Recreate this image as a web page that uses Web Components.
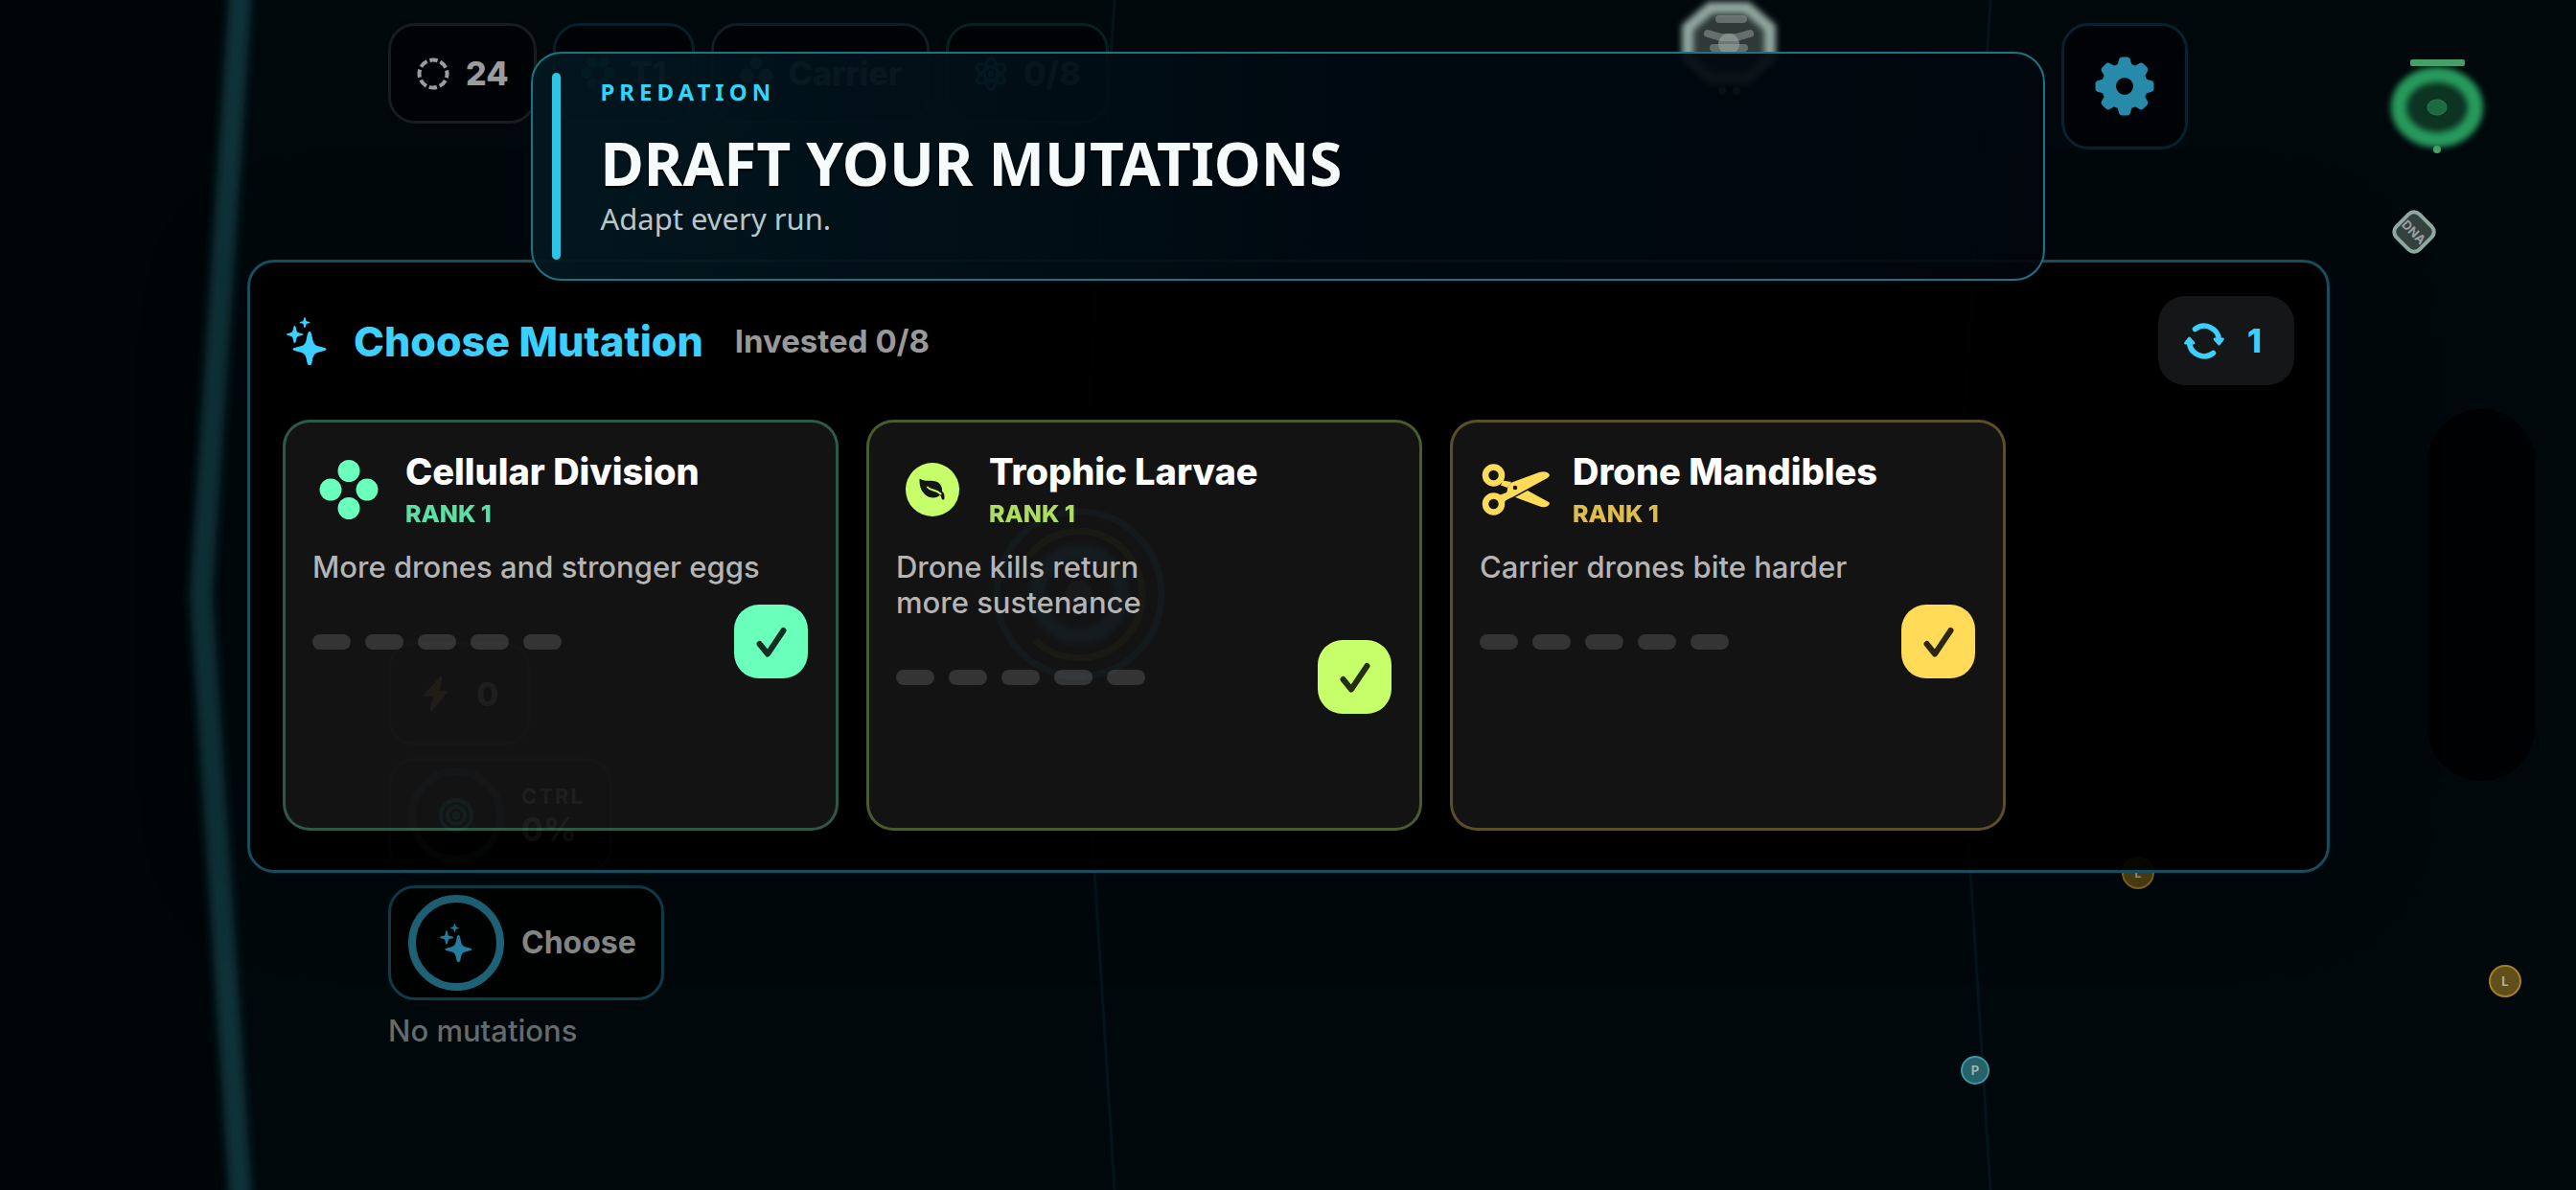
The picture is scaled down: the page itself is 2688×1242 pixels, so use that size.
<!DOCTYPE html>
<html lang="en">
<head>
<meta charset="utf-8">
<meta name="viewport" content="width=device-width, initial-scale=1">
<title>Predation</title>
<style>
  html, body {
    margin: 0;
    height: 100%;
    background: #00080b;
  }
  body {
    font-family: Inter, "Liberation Sans", sans-serif;
    color: #fff;
    overflow: hidden;
  }
</style>
</head>
<body>
<game-app></game-app>

<script>
const ICONS = {
  sparkles: ['0 0 42 50', `
    <path d="M24 15c1.500 0 2 2 3 7 1.300 6.500 2.500 7.500 8 8.800 4 1 6.500 1.400 6.500 2.700s-2.500 1.700-6.500 2.700c-5.500 1.300-6.700 2.300-8 8.800-1 5-1.500 5-3 5s-2 0-3-5c-1.300-6.500-2.500-7.500-8-8.800-4-1-6.500-1.400-6.500-2.700s2.500-1.700 6.500-2.700c5.500-1.300 6.700-2.300 8-8.800 1-5 1.500-7 3-7z"/>
    <path d="M8.500 9c1 0 1.200 1.500 1.700 4 .6 2.500 1.100 2.900 3.300 3.400 2.500.6 4 .8 4 1.600s-1.500 1-4 1.600c-2.200.5-2.700.9-3.300 3.400-.5 2.500-.7 4-1.700 4s-1.200-1.500-1.700-4c-.6-2.500-1.100-2.900-3.300-3.400-2.500-.6-3.500-.8-3.500-1.600s1-1 3.500-1.600c2.200-.5 2.700-.9 3.300-3.400.5-2.500.7-4 1.700-4z"/>
    <path d="M19 0c1 0 .9 3 1.700 4 .7.700 3.800.7 3.800 1.600s-3.100.9-3.800 1.600c-.8 1-.7 4-1.700 4s-.9-3-1.700-4c-.7-.7-3.800-.7-3.800-1.600s3.100-.9 3.800-1.600c.8-1 .7-4 1.700-4z"/>`],
  reroll: ['0 0 42 38', `
    <g fill="none" stroke="currentColor" stroke-width="5.500" stroke-linecap="round">
      <path d="M11.500 6.500A15.500 15.500 0 0 1 36.500 18"/><path d="M30.500 31.500A15.500 15.500 0 0 1 5.500 20"/></g>
    <path d="M32 15.500h9q1.500.5.500 2.500l-4 5q-1 1-2 0l-4.500-5q-1-2 1-2.500z"/>
    <path d="M10 22.500H1q-1.500-.5-.5-2.500l4-5q1-1 2 0l4.500 5q1 2-1 2.500z"/>`],
  cells: ['0 0 62 62', '<circle cx="31" cy="11.500" r="11.500"/><circle cx="12" cy="31" r="11.500"/><circle cx="50" cy="31" r="11.500"/><circle cx="31" cy="50.500" r="11.500"/>'],
  leaf: ['0 0 56 56', `
    <circle cx="28" cy="28" r="28"/>
    <path fill="#141515" d="M15.500 17c4 2.500 8 1.500 13 2 7 .6 10 5 9.500 11 2.500 1.500 2.500 3.500 2.500 7 0 2-2.500 2-3 0-.2-1.500-.6-2.800-2-3.200-3 4-11 3.500-15.500-.8-4.500-4.500-5.500-9.500-5.500-15.300 0-1 .3-1.200 1-.7z"/>
    <path fill="none" stroke="currentColor" stroke-width="2" stroke-linecap="round" d="M23 25.500c3 4 8.500 2 13.500 7"/>`],
  scissors: ['0 0 70 54', `
    <g fill="none" stroke="currentColor" stroke-width="6.500"><circle cx="11.500" cy="12" r="8.500"/><circle cx="11.500" cy="42" r="8.500"/></g>
    <path d="M21 17.500l9 1.500-4 6-7-2.500z"/>
    <path d="M17 33l7-2.500c2.500-1 1.500-4 2.500-6.500 1.200-3 3.500-4.300 6-5.200L59 9c5-1.500 10-.5 11 3-.8 2-1.800 2.500-3 3.200L31 35c-5 2.500-7.500 2.500-8 6z"/>
    <path d="M34 35l13-7 22 12c1.500 1 1 1.500.5 2.500-1.800 3.500-7 3-10.500 1.700z"/>
    <circle cx="34" cy="25" r="2.300" fill="#141515"/>`],
  check: ['0 0 32 32', '<path d="M3.500 18l8.500 10.500L28.500 4" fill="none" stroke="currentColor" stroke-width="6" stroke-linecap="round" stroke-linejoin="round"/>'],
  gear: ['0 0 62 62', `
    <circle cx="31" cy="31" r="16.500" fill="none" stroke="currentColor" stroke-width="15"/>
    ${[0, 45, 90, 135, 180, 225, 270, 315].map(a => `<path transform="rotate(${a} 31 31)" d="M22.500 12l3-10Q26.500.5 28.500.5h5q2 0 3 1.500l3 10z"/>`).join('')}`],
  ring: ['0 0 36 36', `<circle cx="18" cy="18" r="14.500" fill="none" stroke="currentColor" stroke-width="4" stroke-dasharray="8.400 3" stroke-dashoffset="4.200"/>`],
  cluster: ['0 0 36 36', '<circle cx="12" cy="6" r="5.500"/><circle cx="24" cy="6" r="5.500"/><circle cx="6" cy="17" r="5.500"/><circle cx="30" cy="17" r="5.500"/><circle cx="12" cy="28" r="5.500"/><circle cx="24" cy="28" r="5.500"/>'],
  trio: ['0 0 36 36', '<circle cx="18" cy="7" r="6.500"/><circle cx="8" cy="20" r="7.500"/><circle cx="28" cy="20" r="7.500"/><circle cx="18" cy="31" r="5"/>'],
  atom: ['0 0 36 36', `<circle cx="18" cy="18" r="3.500"/>
    <g fill="none" stroke="currentColor" stroke-width="3"><ellipse cx="18" cy="18" rx="6.500" ry="16.500"/>
    <ellipse cx="18" cy="18" rx="6.500" ry="16.500" transform="rotate(60 18 18)"/><ellipse cx="18" cy="18" rx="6.500" ry="16.500" transform="rotate(120 18 18)"/></g>`],
  bolt: ['0 0 28 40', '<path d="M18 1c2-2 3.500-.5 3 1.500L18 16h8c2 0 2 1.500 1 3L10.500 38.500c-2 2-4 1-3.500-1L11 23H2c-2 0-2.500-1.500-1-3z"/>'],
  target: ['0 0 36 36', '<circle cx="18" cy="18" r="4.500"/><g fill="none" stroke="currentColor" stroke-width="4"><circle cx="18" cy="18" r="9"/><circle cx="18" cy="18" r="16"/></g>']
};

function define(name, html, setup) {
  const template = document.createElement('template');
  template.innerHTML = html;
  customElements.define(name, class extends HTMLElement {
    connectedCallback() {
      if (this.shadowRoot) return;
      this.attachShadow({ mode: 'open' });
      this.shadowRoot.appendChild(template.content.cloneNode(true));
      if (setup) setup(this, this.shadowRoot);
    }
  });
}

define('ui-icon', `
  <style>
    :host { display: inline-flex; flex: none; width: 36px; height: 36px; }
    svg { width: 100%; height: 100%; fill: currentColor; overflow: visible; }
  </style>
  <svg aria-hidden="true"></svg>
`, (host, root) => {
  const [box, shapes] = ICONS[host.getAttribute('name')];
  const svg = root.querySelector('svg');
  svg.setAttribute('viewBox', box);
  svg.innerHTML = shapes;
});

// Playfield: membrane, creatures and pickups
define('game-world', `
  <style>
    :host { display: block; min-width: 0; min-height: 0; overflow: hidden; }
    svg { display: block; width: 100%; height: 100%; }
    text { font-family: Inter, sans-serif; font-weight: 700; text-anchor: middle; }
  </style>
  <svg viewBox="0 0 2688 1242" preserveAspectRatio="xMidYMid slice">
    <defs>
      <filter id="soft" x="-20%" y="-20%" width="140%" height="140%"><feGaussianBlur stdDeviation="3"/></filter>
      <filter id="wall" filterUnits="userSpaceOnUse" x="150" y="-40" width="160" height="1320"><feGaussianBlur stdDeviation="5"/></filter>
    </defs>
    <path d="M0 0H250L210 621 250 1242H0z" fill="#000508"/>
    <path d="M253-40L210 621 253 1282" fill="none" stroke="#103338" stroke-width="24" filter="url(#wall)"/>
    <g fill="none" stroke="#02151a" stroke-width="3">
      <path d="M1163 0L1124 621 1163 1242"/><path d="M2077 0L2038 621 2077 1242"/>
    </g>

    <g transform="translate(1804 45)">
      <path d="M-19-37H19L43-16V16L19 37H-19L-43 16V-16z" fill="#2f3a38"/>
      <path d="M-19-37H19L43-16V16L19 37H-19L-43 16V-16z" fill="none" stroke="#91a69f" stroke-width="12" filter="url(#soft)"/>
      <g fill="none" stroke="#8b918f" stroke-opacity=".6" stroke-width="8" stroke-linecap="round">
        <path d="M-10-25H15"/><path d="M-22-10L-8-6H8L22-10"/><path d="M-16 5H16"/>
      </g>
      <circle r="11" cy="1" fill="#9aa3a0" fill-opacity=".6"/>
      <circle cx="-7" cy="50" r="4" fill="#6b7848"/><circle cx="8" cy="50" r="4" fill="#6b7848"/>
    </g>

    <g transform="translate(2543 112)">
      <ellipse rx="40" ry="34" fill="#0d3322"/>
      <ellipse rx="40" ry="34" fill="none" stroke="#279a5c" stroke-width="16" filter="url(#soft)"/>
      <ellipse rx="10" ry="8" fill="#1a6b41" stroke="#2c7a50"/>
      <rect x="-28" y="-50" width="57" height="7" rx="2" fill="#469f66"/>
      <circle cy="44" r="4" fill="#469f66"/>
    </g>

    <g transform="translate(2519 242) rotate(45)">
      <rect x="-17" y="-17" width="34" height="34" rx="8" fill="#33413f" stroke="#8fa8a2" stroke-width="4"/>
      <text y="5" font-size="13" fill="#9b9f9f">DNA</text>
    </g>

    <g fill="none">
      <circle cx="1126" cy="620" r="86" stroke="#1d6b70" stroke-opacity=".9" stroke-width="7"/>
      <path d="M1080 668A66 66 0 1 0 1074 580" stroke="#6b6420" stroke-width="7"/>
      <circle cx="1126" cy="620" r="44" stroke="#2685aa" stroke-width="16" filter="url(#soft)"/>
      <circle cx="1126" cy="620" r="14" fill="#4d5a60"/>
    </g>

    <rect x="2533" y="427" width="112" height="388" rx="56" fill="#000102"/>

    <g font-size="13">
      <circle cx="2231" cy="911" r="16" fill="#4d3f15" stroke="#80651b" stroke-width="2"/><text x="2231" y="916" fill="#98937f">L</text>
      <circle cx="2614" cy="1024" r="16" fill="#604f1b" stroke="#a37f26" stroke-width="2"/><text x="2614" y="1029" fill="#b3ad9a">L</text>
      <circle cx="2061" cy="1117" r="14" fill="#25626a" stroke="#3a97a5" stroke-width="2"/><text x="2061" y="1122" fill="#a3b3b5">P</text>
    </g>
  </svg>
`);

define('hud-chip', `
  <style>
    :host {
      display: flex;
      align-items: center;
      gap: 16px;
      box-sizing: border-box;
      height: 105px;
      padding: 0 26px;
      border: 3px solid var(--edge, #181c1e);
      border-radius: 28px;
      background: #000305;
      color: var(--ink, #9c9c9c);
      font-size: 34px;
      font-weight: 800;
    }
    ui-icon { color: var(--tint, currentColor); }
  </style>
  <slot></slot>
`, (host, root) => {
  const icon = document.createElement('ui-icon');
  icon.setAttribute('name', host.getAttribute('icon'));
  root.insertBefore(icon, root.querySelector('slot'));
});

define('hud-gauge', `
  <style>
    :host { display: block; }
    button {
      display: flex;
      align-items: center;
      gap: 18px;
      box-sizing: border-box;
      height: 120px;
      padding: 0 26px 0 18px;
      border: 3px solid var(--edge);
      border-radius: 28px;
      background: #000202;
      color: var(--ink, #878787);
      font: 700 32px/36px Inter, sans-serif;
      text-align: left;
    }
    .dial {
      display: grid;
      place-items: center;
      box-sizing: border-box;
      width: 100px;
      height: 100px;
      border: 8px solid var(--ring);
      border-radius: 50%;
      color: var(--tint);
    }
  </style>
  <button type="button"><span class="dial"><slot name="icon"></slot></span><span><slot></slot></span></button>
`);

define('game-hud', `
  <style>
    :host {
      display: flex;
      flex-direction: column;
      justify-content: space-between;
      box-sizing: border-box;
      padding: 24px 405px 147px;
    }
    .top, .chips { display: flex; align-items: flex-start; }
    .top { justify-content: space-between; }
    .chips { gap: 17px; }
    .side { display: flex; flex-direction: column; align-items: flex-start; gap: 13px; }
    .settings {
      display: grid;
      place-items: center;
      width: 132px;
      height: 132px;
      border: 3px solid #06222c;
      border-radius: 28px;
      background: #000305;
      color: #278aab;
    }
    .settings ui-icon { width: 62px; height: 62px; }
    .energy { height: 108px; --edge: #3a3012; --tint: #ad8a30; --ink: #9c9c9c; gap: 24px; padding: 0 29px; }
    .label { display: block; font-size: 22px; line-height: 30px; letter-spacing: 2px; }
    .value { display: block; font-size: 34px; line-height: 40px; }
    .spark { width: 34px; height: 40px; }
    p { margin: 0; font-size: 31px; line-height: 38px; font-weight: 500; color: #656a6b; }
  </style>
  <div class="top">
    <div class="chips">
      <hud-chip icon="ring">24</hud-chip>
      <hud-chip icon="cluster" style="--edge: #06202a; --tint: #155c70; --ink: #6b6b6b">T1</hud-chip>
      <hud-chip icon="trio" style="--edge: #111c24; --tint: #3c5f6c; --ink: #6b6b6b">Carrier</hud-chip>
      <hud-chip icon="atom" style="--edge: #06221f; --tint: #1c8a84; --ink: #6b6b6b">0/8</hud-chip>
    </div>
    <button class="settings" type="button" aria-label="Settings"><ui-icon name="gear"></ui-icon></button>
  </div>
  <div class="side">
    <hud-chip class="energy" icon="bolt">0</hud-chip>
    <hud-gauge style="--edge: #16303a; --ring: #2c3638; --tint: #18a09e; --ink: #a8a8a8">
      <ui-icon slot="icon" name="target"></ui-icon>
      <span class="label">CTRL</span><span class="value">0%</span>
    </hud-gauge>
    <hud-gauge style="--edge: #103c4a; --ring: #1f6378; --tint: #23809e">
      <ui-icon slot="icon" class="spark" name="sparkles"></ui-icon>Choose
    </hud-gauge>
    <p>No mutations</p>
  </div>
`);
// slotted gauge lines are styled by game-hud, which owns them

define('mutation-card', `
  <style>
    :host {
      display: flex;
      flex-direction: column;
      box-sizing: border-box;
      min-height: 429px;
      padding: 30px 29px 29px 28px;
      border: 3px solid color-mix(in srgb, var(--tint) 30%, transparent);
      border-radius: 28px;
      background: rgba(240, 246, 255, .08);
    }
    header { display: flex; align-items: center; gap: 22px; }
    .glyph { display: grid; place-items: center; width: 75px; color: var(--tint); }
    h3 { margin: 0 0 8px; font-size: 38px; line-height: 43px; font-weight: 800; }
    .rank { display: block; font-size: 25px; line-height: 29px; font-weight: 800; color: var(--tint); opacity: .86; }
    p { max-width: 490px; margin: 22px 0 21px; font-size: 31px; line-height: 37px; font-weight: 500; color: #b5b5b5; text-wrap: balance; }
    footer { display: flex; align-items: center; justify-content: space-between; }
    .pips { display: flex; gap: 15px; }
    .pips i { width: 40px; height: 16px; border-radius: 8px; background: rgba(255, 255, 255, .14); }
    button {
      display: grid;
      place-items: center;
      width: 77px;
      height: 77px;
      padding: 0;
      border: 0;
      border-radius: 26px;
      background: var(--tint);
      color: color-mix(in srgb, var(--tint) 18%, #000);
    }
    button ui-icon { width: 32px; height: 32px; }
  </style>
  <header>
    <span class="glyph"><slot name="icon"></slot></span>
    <div><h3><slot name="title"></slot></h3><span class="rank"><slot name="rank"></slot></span></div>
  </header>
  <p><slot></slot></p>
  <footer>
    <div class="pips"><i></i><i></i><i></i><i></i><i></i></div>
    <button type="button" aria-label="Take mutation"><ui-icon name="check"></ui-icon></button>
  </footer>
`);

define('mutation-panel', `
  <style>
    :host {
      display: block;
      box-sizing: border-box;
      padding: 35px 34px 41px;
      border: 3px solid #154e60;
      border-radius: 28px;
      background: rgba(0, 0, 0, .92);
      box-shadow: 0 0 120px rgba(0, 0, 0, .18);
    }
    header { display: flex; align-items: center; margin-bottom: 36px; color: #3dd0ff; }
    .mark { width: 42px; height: 50px; margin-left: 4px; }
    h2 { margin: 0 33px 0 28px; font-size: 43px; line-height: 50px; font-weight: 800; }
    .spent { color: #999; font-size: 33px; line-height: 36px; font-weight: 700; }
    button {
      display: flex;
      align-items: center;
      gap: 24px;
      height: 93px;
      margin-left: auto;
      padding: 0 34px 0 27px;
      border: 0;
      border-radius: 28px;
      background: #151617;
      color: inherit;
      font: 800 34px/40px Inter, sans-serif;
    }
    button ui-icon { width: 42px; height: 38px; }
    .cards { display: grid; grid-auto-flow: column; grid-auto-columns: 580px; gap: 29px; }
    .cells { width: 62px; height: 62px; }
    .leaf { width: 56px; height: 56px; }
    .scissors { width: 70px; height: 54px; }
  </style>
  <header>
    <ui-icon class="mark" name="sparkles"></ui-icon>
    <h2>Choose Mutation</h2>
    <span class="spent">Invested 0/8</span>
    <button type="button" aria-label="Reroll, 1 left"><ui-icon name="reroll"></ui-icon>1</button>
  </header>
  <div class="cards">
    <mutation-card style="--tint: #6bffbc">
      <ui-icon slot="icon" class="cells" name="cells"></ui-icon>
      <span slot="title">Cellular Division</span><span slot="rank">RANK 1</span>More drones and stronger eggs
    </mutation-card>
    <mutation-card style="--tint: #c7ff6b">
      <ui-icon slot="icon" class="leaf" name="leaf"></ui-icon>
      <span slot="title">Trophic Larvae</span><span slot="rank">RANK 1</span>Drone kills return more sustenance
    </mutation-card>
    <mutation-card style="--tint: #ffdb57">
      <ui-icon slot="icon" class="scissors" name="scissors"></ui-icon>
      <span slot="title">Drone Mandibles</span><span slot="rank">RANK 1</span>Carrier drones bite harder
    </mutation-card>
  </div>
`);

define('title-banner', `
  <style>
    :host {
      display: flex;
      gap: 41px;
      box-sizing: border-box;
      padding: 20px;
      border: 2px solid #1b7384;
      border-radius: 32px;
      background: linear-gradient(90deg, rgba(3, 23, 31, .94), rgba(0, 10, 18, .92) 50%, rgba(0, 6, 13, .92));
      font-family: "Noto Sans", sans-serif;
    }
    .bar { width: 9px; border-radius: 5px; background: #2ec4e4; }
    .copy { padding: 3px 0 25px; }
    .kicker { font-size: 24px; line-height: 34px; font-weight: 700; letter-spacing: 5px; color: #31d5f8; }
    h1 { margin: 17px 0 0; font-size: 62px; line-height: 80px; font-weight: 700; color: #f5fafb; text-shadow: 0 2px 2px #000; }
    p { margin: 0; font-size: 31px; line-height: 36px; color: #b6c6cc; }
  </style>
  <span class="bar"></span>
  <div class="copy">
    <div class="kicker"><slot name="kicker"></slot></div>
    <h1><slot name="title"></slot></h1>
    <p><slot></slot></p>
  </div>
`);

define('game-app', `
  <style>
    :host { display: grid; grid-template: 100vh / 100%; overflow: hidden; }
    game-world, game-hud, mutation-panel, title-banner { grid-area: 1 / 1; }
    mutation-panel { align-self: start; margin: 271px 257px 0 258px; }
    title-banner { align-self: start; justify-self: center; width: 58.75%; margin-top: 54px; }
  </style>
  <game-world></game-world>
  <game-hud></game-hud>
  <mutation-panel></mutation-panel>
  <title-banner>
    <span slot="kicker">PREDATION</span><span slot="title">DRAFT YOUR MUTATIONS</span>Adapt every run.
  </title-banner>
`);
</script>
</body>
</html>
